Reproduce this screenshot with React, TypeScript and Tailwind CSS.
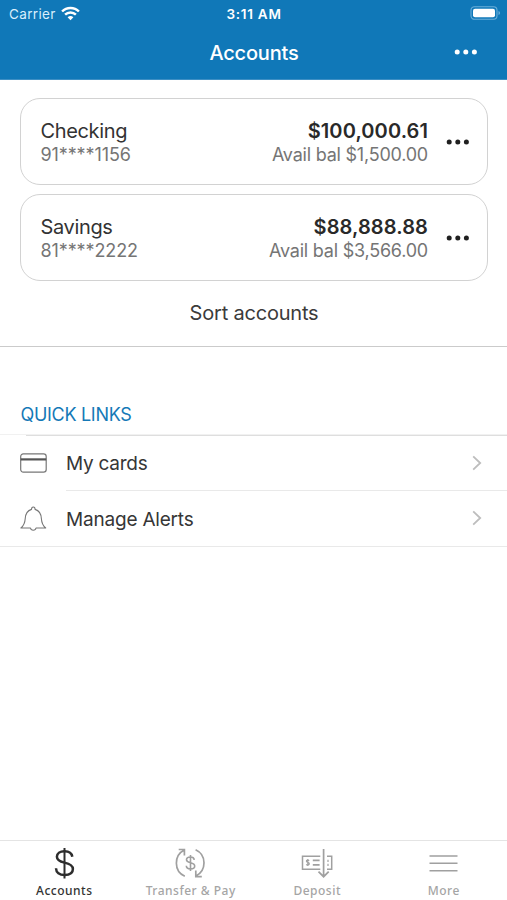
import React from "react";

function Dots({ className }: { className: string }) {
  return (
    <svg width="24" height="6" viewBox="0 0 24 6" className={className} fill="currentColor">
      <circle cx="3.2" cy="3" r="2.5" />
      <circle cx="11.8" cy="3" r="2.5" />
      <circle cx="20.4" cy="3" r="2.5" />
    </svg>
  );
}

function Header() {
  return (
    <header className="h-20 shrink-0 border-b border-[#3d8fc4] bg-[#1078b8] text-white">
      <div className="grid h-7 grid-cols-3 items-center pl-[9px] pr-[6px]">
        <div className="flex items-center gap-[5px]">
          <span className="text-[13.5px] leading-7 tracking-[0.35px] text-[#d9effc]">Carrier</span>
          <svg width="19" height="15" viewBox="0 0 19 15" fill="none" stroke="currentColor" strokeWidth="2.5" className="-mt-[2px]">
            <path d="M1.1 5.5C5.6.9 13.4.9 17.9 5.5" />
            <path d="M4.1 8.6c3-2.9 7.8-2.9 10.8 0" />
            <path d="M6.6 11.2q2.9-2.4 5.8 0L9.5 14.2z" fill="currentColor" stroke="none" />
          </svg>
        </div>
        <span className="pr-[2px] text-center text-[13.5px] font-semibold leading-7 tracking-[0.75px]">3:11 AM</span>
        <svg width="31" height="14" viewBox="0 0 31 14" className="-mt-[2px] justify-self-end">
          <rect x="1" y="0.7" width="26" height="12.6" rx="3.5" fill="none" stroke="#6aaed9" strokeWidth="1.1" />
          <rect x="3" y="2.7" width="22" height="8.6" rx="2" fill="white" />
          <path d="M28.5 5v4q1.6-.6 1.6-2t-1.6-2" fill="#6aaed9" />
        </svg>
      </div>
      <div className="grid h-[50px] grid-cols-3 items-center pl-[30px] pr-[29px]">
        <h1 className="col-start-2 text-center text-[20px] font-medium leading-[50px] tracking-[-0.2px]">Accounts</h1>
        <Dots className="-mt-[2px] justify-self-end" />
      </div>
    </header>
  );
}

function AccountCard({ name, num, total, avail }: { name: string; num: string; total: string; avail: string }) {
  return (
    <article className="flex h-[87px] items-center rounded-[20px] border border-[#d2d2d2] pl-[19.5px] pr-[17px]">
      <div className="flex-1 pt-[2px]">
        <div className="text-[20px] leading-6 tracking-[-0.35px] text-[#333]">{name}</div>
        <div className="text-[18px] leading-[23px] tracking-[-0.1px] text-[#757575]">{num}</div>
      </div>
      <div className="pt-[2px] text-right">
        <div className="text-[20px] font-semibold leading-6 tracking-[0.1px] text-[#292929]">{total}</div>
        <div className="text-[18px] leading-[23px] tracking-[-0.22px] text-[#757575]">{avail}</div>
      </div>
      <Dots className="ml-[18px] text-[#202020]" />
    </article>
  );
}

function Chevron() {
  return (
    <svg width="10" height="16" viewBox="0 0 10 16" fill="none" stroke="#bdbdbd" strokeWidth="1.8" className="-mt-px">
      <path d="M1.2 1.3 8.2 8l-7 6.7" />
    </svg>
  );
}

function CardIcon() {
  return (
    <svg width="28" height="20" viewBox="0 0 28 20" fill="none" stroke="#777" className="-mt-px">
      <rect x="0.7" y="0.8" width="25.5" height="18.4" rx="2.6" strokeWidth="1.2" />
      <path d="M.7 6.4h25.5" stroke="#555" strokeWidth="2.2" />
    </svg>
  );
}

function BellIcon() {
  return (
    <svg width="28" height="26" viewBox="0 0 28 26" fill="none" stroke="#777" strokeWidth="1.1" strokeLinejoin="round">
      <path d="M.9 22c3-2.5 4-4.5 4.3-9.3.3-5.2 2.5-8.2 6.3-9.3 0-3.2 3.6-3.2 3.6 0 3.8 1.1 6 4.1 6.3 9.3.3 4.8 1.3 6.8 4.3 9.3H16c-.5 3-5 3-5.5 0z" />
    </svg>
  );
}

function DollarIcon() {
  return (
    <svg width="32" height="32" viewBox="0 0 32 32" fill="none" stroke="#2d2d2d" strokeWidth="2.5">
      <path d="M24.3 9.7C23.8 6.3 20.8 4.2 16.5 4.2c-4.5 0-7.6 2.2-7.6 5.6 0 3.5 3 4.8 7.6 5.8 5.1 1.1 8.4 2.5 8.4 6.4 0 3.9-3.4 6-8.3 6-5.2 0-8.5-2.6-8.6-6.7" />
      <path d="M16.5 1v30.5" strokeWidth="2" />
    </svg>
  );
}

function TransferIcon() {
  return (
    <svg width="32" height="32" viewBox="0 0 32 32" fill="none" stroke="#a0a0a0" strokeWidth="1.7">
      <path d="M9.8 29.3C-1.4 24.2-1.3 8.5 9.3 3.1M3.7 2.5h5.7v6.1" />
      <path d="M20.6 2.7C31.8 7.8 31.7 23.5 20.9 29M26.8 29.6h-6v-6" />
      <path d="M19.3 12.8c-.3-2-1.8-2.8-4-2.8-2.3 0-3.8 1-3.8 2.8 0 4 8.2 1.8 8.2 6.2 0 1.9-1.7 3-4.2 3s-4.1-1.1-4.2-3.2M15.5 8v16" strokeWidth="1.6" />
    </svg>
  );
}

function DepositIcon() {
  return (
    <svg width="34" height="32" viewBox="0 0 34 32" fill="none" stroke="#a0a0a0" strokeWidth="1.5">
      <path d="M20.3 9.2H2.5v13h17.8M27 9.2h4.7v13H27" />
      <path d="M23.6 2v27.5M18.5 24.7l5.1 5 5.1-5" strokeWidth="1.7" />
      <path d="M12.8 13.3h6.8M12.8 17.8h6.8" strokeWidth="1.7" />
      <path d="M9.2 13.7c-1-1.2-2.9-.7-2.8.5.1 1.5 2.9.9 2.9 2.6 0 1.3-2.1 1.7-3.1.5M7.8 12v7M28 12.7v2.2M28 16.7v2.2" strokeWidth="1.2" />
    </svg>
  );
}

function MoreIcon() {
  return (
    <svg width="32" height="32" viewBox="0 0 32 32" stroke="#a0a0a0" strokeWidth="1.6">
      <path d="M1.5 9h28M1.5 16.3h28M1.5 23.7h28" />
    </svg>
  );
}

const tabs = [
  { label: "Accounts", icon: <DollarIcon />, color: "text-[#333]" },
  { label: "Transfer & Pay", icon: <TransferIcon />, color: "text-[#a5a5a5]" },
  { label: "Deposit", icon: <DepositIcon />, color: "text-[#a5a5a5]" },
  { label: "More", icon: <MoreIcon />, color: "text-[#a5a5a5]" },
];

export default function App() {
  return (
    <div className="flex h-[900px] w-[507px] flex-col overflow-hidden bg-white font-[Inter,sans-serif]">
      <Header />
      <main className="flex-1">
        <section className="h-[267px] border-b border-[#cbcbcb] pl-5 pr-[19px] pt-[18px]">
          <div className="flex flex-col gap-[9px]">
            <AccountCard name="Checking" num="91****1156" total="$100,000.61" avail="Avail bal $1,500.00" />
            <AccountCard name="Savings" num="81****2222" total="$88,888.88" avail="Avail bal $3,566.00" />
          </div>
          <button className="block w-full text-center text-[20px] leading-[64px] tracking-[-0.2px] text-[#3b3b3b]">Sort accounts</button>
        </section>
        <section>
          <div className="h-[87px] pl-[20.5px] pt-[56px]">
            <h2 className="text-[18px] leading-6 tracking-[-0.3px] text-[#1579b7]">QUICK LINKS</h2>
          </div>
          <div className="h-px bg-[#f1f1f1]" />
          <div className="ml-[26px] h-px bg-[#dedede]" />
          <a className="flex h-[54px] items-center pl-5 pr-[25px]">
            <CardIcon />
            <span className="ml-[18px] flex-1 pt-[2px] text-[19px] tracking-[-0.25px] text-[#363636]">My cards</span>
            <Chevron />
          </a>
          <div className="ml-[66px] h-px bg-[#e9e9e9]" />
          <a className="flex h-[56px] items-center border-b border-[#e9e9e9] pl-5 pr-[25px]">
            <BellIcon />
            <span className="ml-[18px] flex-1 pt-[3px] text-[19px] tracking-[-0.2px] text-[#363636]">Manage Alerts</span>
            <Chevron />
          </a>
        </section>
      </main>
      <nav className="grid h-[60px] shrink-0 grid-cols-4 border-t border-[#e4e4e4] pl-px font-['Noto_Sans',sans-serif]">
        {tabs.map((tab) => (
          <button key={tab.label} className={"flex flex-col items-center pt-[6px] " + tab.color}>
            {tab.icon}
            <span className="mt-1 whitespace-nowrap text-[12px] font-medium leading-4 tracking-[0.5px]">{tab.label}</span>
          </button>
        ))}
      </nav>
    </div>
  );
}
